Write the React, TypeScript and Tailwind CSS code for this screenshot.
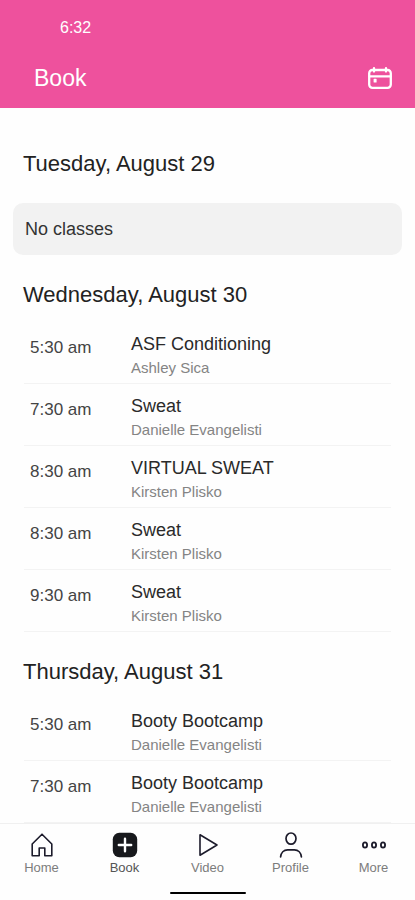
import React, { useState } from 'react';
import clsx from 'clsx';

interface ClassItem {
  time: string;
  title: string;
  instructor: string;
}

interface Day {
  label: string;
  classes: ClassItem[];
}

const days: Day[] = [
  { label: 'Tuesday, August 29', classes: [] },
  {
    label: 'Wednesday, August 30',
    classes: [
      { time: '5:30 am', title: 'ASF Conditioning', instructor: 'Ashley Sica' },
      { time: '7:30 am', title: 'Sweat', instructor: 'Danielle Evangelisti' },
      { time: '8:30 am', title: 'VIRTUAL SWEAT', instructor: 'Kirsten Plisko' },
      { time: '8:30 am', title: 'Sweat', instructor: 'Kirsten Plisko' },
      { time: '9:30 am', title: 'Sweat', instructor: 'Kirsten Plisko' },
    ],
  },
  {
    label: 'Thursday, August 31',
    classes: [
      { time: '5:30 am', title: 'Booty Bootcamp', instructor: 'Danielle Evangelisti' },
      { time: '7:30 am', title: 'Booty Bootcamp', instructor: 'Danielle Evangelisti' },
    ],
  },
];

const CalendarIcon = () => (
  <svg width="26" height="24" viewBox="0 0 26 24" fill="none" stroke="currentColor" strokeWidth="2.3" strokeLinecap="round">
    <rect x="2.2" y="4" width="21.6" height="17.8" rx="3.2" />
    <path d="M2.5 10.4h21M7 2.2v3.4M19 2.2v3.4" />
    <rect x="6.6" y="12.8" width="3" height="3.8" rx="0.6" fill="currentColor" stroke="none" />
  </svg>
);

const HomeIcon = () => (
  <svg width="26" height="26" viewBox="0 0 26 26" fill="none" stroke="currentColor" strokeWidth="1.6" strokeLinejoin="round">
    <path d="M3.2 12 13 2.200 22.800 12v11.800h-7V16h-5.600v7.800h-7z" />
  </svg>
);

const BookIcon = () => (
  <svg width="26" height="26" viewBox="0 0 26 26" fill="none">
    <rect x="0.8" y="0.8" width="24.4" height="24.4" rx="6.5" fill="#17181c" />
    <path d="M13 6.800v12.400M6.800 13h12.400" stroke="#fff" strokeWidth="2.4" strokeLinecap="round" />
  </svg>
);

const VideoIcon = () => (
  <svg width="26" height="26" viewBox="0 0 26 26" fill="none" stroke="currentColor" strokeWidth="1.6" strokeLinejoin="round">
    <path d="M5 2.800v20.400L22 13z" />
  </svg>
);

const ProfileIcon = () => (
  <svg width="26" height="26" viewBox="0 0 26 26" fill="none" stroke="currentColor" strokeWidth="1.7" strokeLinecap="round">
    <ellipse cx="13" cy="6.600" rx="5" ry="5.600" />
    <path d="M2.600 24.800c.400-4 3.200-7 7-7h6.800c3.800 0 6.600 3 7 7" />
  </svg>
);

const MoreIcon = () => (
  <svg width="26" height="26" viewBox="0 0 26 26" fill="none" stroke="currentColor" strokeWidth="1.8">
    <ellipse cx="4" cy="13" rx="2.1" ry="2.6" />
    <ellipse cx="13" cy="13" rx="2.1" ry="2.6" />
    <ellipse cx="22" cy="13" rx="2.1" ry="2.6" />
  </svg>
);

const tabs = [
  { label: 'Home', icon: HomeIcon },
  { label: 'Book', icon: BookIcon },
  { label: 'Video', icon: VideoIcon },
  { label: 'Profile', icon: ProfileIcon },
  { label: 'More', icon: MoreIcon },
];

const ClassRow: React.FC<{ item: ClassItem }> = ({ item }) => (
  <li className="border-b border-[#f3f3f3]">
    <button type="button" className="flex w-full items-start pt-[9px] pb-[5px] pl-[6px] text-left">
      <span className="w-[101px] shrink-0 pt-[5px] text-[17px] leading-6 text-[#444]">{item.time}</span>
      <span className="flex min-w-0 flex-col">
        <span className="text-[18px] leading-[26px] text-[#2a2a2a]">{item.title}</span>
        <span className="text-[15px] leading-[21px] text-[#848484]">{item.instructor}</span>
      </span>
    </button>
  </li>
);

const DaySection: React.FC<{ day: Day }> = ({ day }) => (
  <section>
    <h2 className="px-[23px] pt-[25px] pb-3 text-[22px] leading-[30px] text-[#222]">{day.label}</h2>
    {day.classes.length === 0 ? (
      <p className="mx-[13px] mt-3 rounded-[10px] bg-[#f2f2f2] px-3 py-[14px] text-[18px] leading-6 text-[#333]">
        No classes
      </p>
    ) : (
      <ul className="mx-6">
        {day.classes.map((item, i) => (
          <ClassRow key={i} item={item} />
        ))}
      </ul>
    )}
  </section>
);

export default function App() {
  const [active, setActive] = useState('Book');

  return (
    <div className="flex h-screen flex-col bg-[#fefefe] font-['Liberation_Sans',Arial,sans-serif]">
      <header className="shrink-0 bg-[#ee519d] text-white">
        <div className="px-[60px] pt-4 text-[16px] leading-6">6:32</div>
        <div className="flex items-center justify-between pt-[22px] pr-[22px] pb-[14px] pl-[34px]">
          <h1 className="text-[23px] leading-8">Book</h1>
          <button type="button" aria-label="Open calendar">
            <CalendarIcon />
          </button>
        </div>
      </header>

      <main className="min-h-0 flex-1 overflow-y-auto pt-4 [scrollbar-width:none]">
        {days.map((day) => (
          <DaySection key={day.label} day={day} />
        ))}
      </main>

      <nav className="shrink-0 border-t border-[#f0f0f0] pt-2">
        <div className="grid grid-cols-5">
          {tabs.map(({ label, icon: Icon }) => (
            <button
              key={label}
              type="button"
              onClick={() => setActive(label)}
              className="flex flex-col items-center text-[#1c1b2b]"
            >
              <Icon />
              <span
                className={clsx(
                  'pt-[2px] text-[13px] leading-4',
                  active === label ? 'text-[#555]' : 'text-[#7c7c7c]'
                )}
              >
                {label}
              </span>
            </button>
          ))}
        </div>
        <div className="mx-auto mt-4 mb-[6px] h-[2px] w-[76px] rounded-full bg-black" />
      </nav>
    </div>
  );
}
